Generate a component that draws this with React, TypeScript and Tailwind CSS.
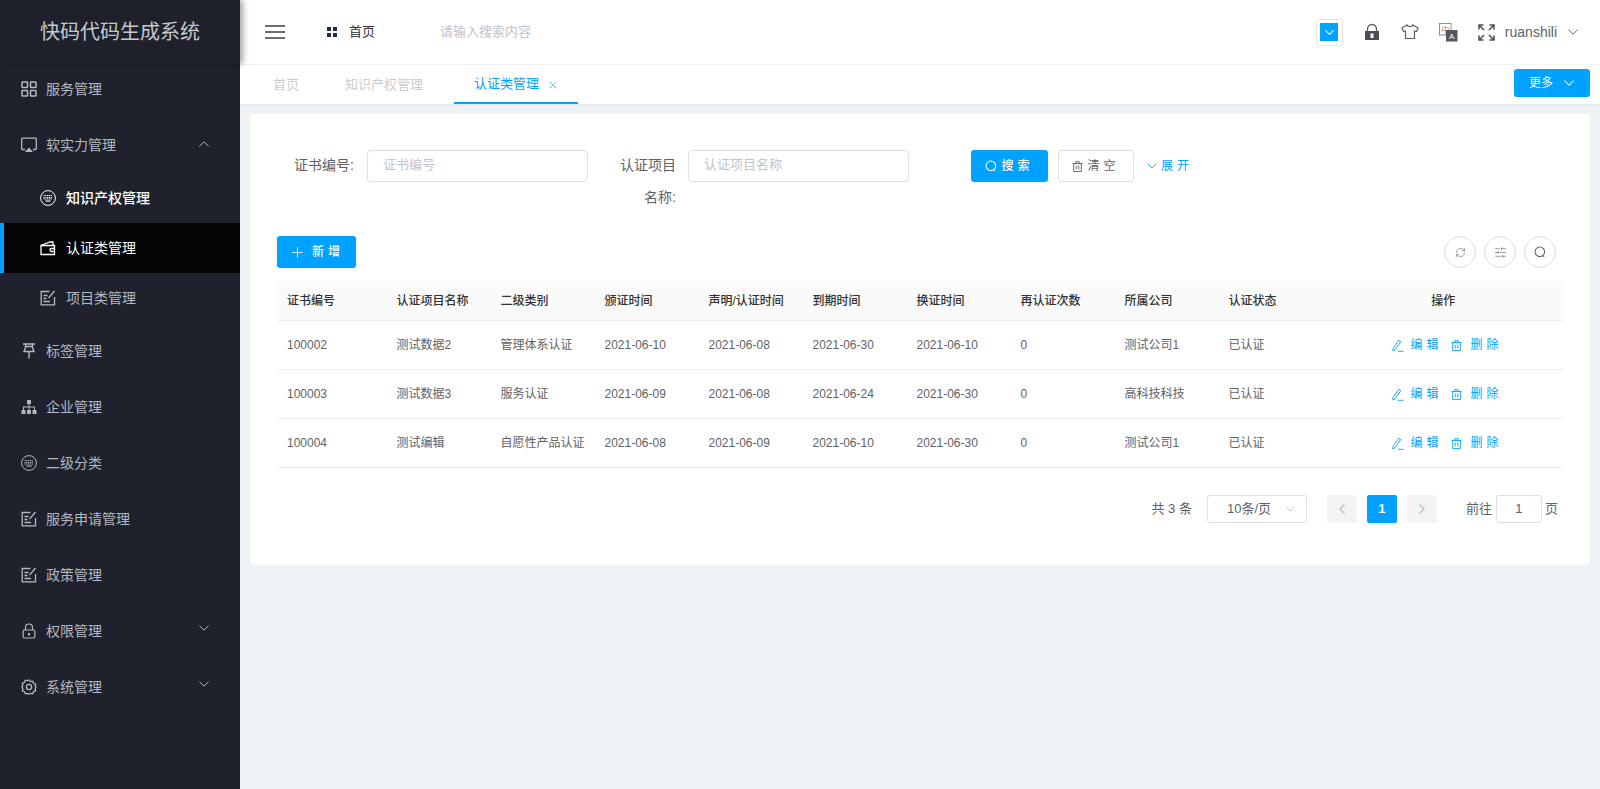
import { ChevronDown, ChevronLeft, ChevronRight, ChevronUp, Plus, RefreshCw, SlidersHorizontal, X } from 'lucide-react';
import type { ReactNode } from 'react';

const FONT = "font-['Liberation_Sans','Noto_Sans_CJK_SC',sans-serif]";

// sidebar icons, drawn to match the iconfont glyphs
const GridIcon = () => (
  <svg width="16" height="16" viewBox="0 0 16 16" fill="none" stroke="currentColor" strokeWidth="1.5">
    <rect x="1" y="1" width="5.5" height="5.5" rx="0.5" />
    <rect x="9.5" y="1" width="5.5" height="5.5" rx="0.5" />
    <rect x="1" y="9.5" width="5.5" height="5.5" rx="0.5" />
    <rect x="9.5" y="9.5" width="5.5" height="5.5" rx="0.5" />
  </svg>
);
const ScreenIcon = () => (
  <svg width="16" height="16" viewBox="0 0 16 16" fill="none" stroke="currentColor" strokeWidth="1.3">
    <path d="M4 12.5H1.5a.8.8 0 0 1-.8-.8V2a.8.8 0 0 1 .8-.8h13a.8.8 0 0 1 .8.8v9.7a.8.8 0 0 1-.8.8H12" />
    <path d="M8 10.5l4 4.5H4z" fill="currentColor" stroke="none" />
  </svg>
);
const KeyboardIcon = () => (
  <svg width="16" height="16" viewBox="0 0 16 16" fill="none" stroke="currentColor" strokeWidth="1">
    <circle cx="8" cy="8" r="7.4" />
    <path d="M3.5 5.5h9M3.5 7.5h9M3.5 9h9" strokeDasharray="1.2 0.6" strokeWidth="1.1" />
    <path d="M5.5 11h5" strokeWidth="1.1" />
  </svg>
);
const WalletIcon = () => (
  <svg width="16" height="16" viewBox="0 0 16 16" fill="none" stroke="currentColor" strokeWidth="1.3">
    <path d="M1 5.5h13.5v9H1z" />
    <path d="M1 5.5l9-3.5h3v3.5" />
    <path d="M14.5 8.5h-3a1.3 1.3 0 0 0 0 3h3" />
  </svg>
);
const NoteIcon = () => (
  <svg width="16" height="16" viewBox="0 0 16 16" fill="none" stroke="currentColor" strokeWidth="1.3">
    <path d="M9.5 1.5H1.2v13.3h13.3V7" />
    <path d="M3.5 5.5h4M3.5 8.5h3M3.5 11.5h6.5" />
    <path d="M8.5 8L14.5 1" />
  </svg>
);
const PinIcon = () => (
  <svg width="16" height="16" viewBox="0 0 16 16" fill="none" stroke="currentColor" strokeWidth="1.4">
    <path d="M2 1h12M4.5 1v2.5h7V1M5 3.5L3 8.5h10l-2-5M8 8.5V15.5" />
  </svg>
);
const TreeIcon = () => (
  <svg width="16" height="16" viewBox="0 0 16 16" fill="currentColor">
    <rect x="6" y="1" width="4" height="4" rx="0.6" />
    <rect x="0.5" y="11" width="4" height="4" rx="0.6" />
    <rect x="6" y="11" width="4" height="4" rx="0.6" />
    <rect x="11.5" y="11" width="4" height="4" rx="0.6" />
    <path d="M7.5 5h1v2.5h5.5v3.5h-1V8.5H8.500V11h-1V8.5H3V11H2V7.5h5.500z" />
  </svg>
);
const LockIcon = () => (
  <svg width="16" height="16" viewBox="0 0 16 16" fill="none" stroke="currentColor" strokeWidth="1.2">
    <rect x="2.2" y="7" width="11.6" height="8" rx="1.2" />
    <path d="M4.5 7V4.5a3.5 3.5 0 0 1 7 0V7" />
    <rect x="7" y="10" width="2" height="2.5" fill="currentColor" stroke="none" />
  </svg>
);
const GearIcon = () => (
  <svg width="16" height="16" viewBox="0 0 16 16" fill="none" stroke="currentColor" strokeWidth="1.3">
    <path d="M8 1l1.5 1.6 2.2-.4.8 2.1 2.1.8-.4 2.2L15 8l-.8 1.7.4 2.2-2.1.8-.8 2.1-2.2-.4L8 15l-1.500-.6-2.200.4-.8-2.100-2.100-.8.4-2.200L1 8l.8-1.700-.4-2.200 2.100-.8.8-2.100 2.200.4z" />
    <circle cx="8" cy="8" r="2.6" />
  </svg>
);
const PencilIcon = () => (
  <svg width="12" height="13" viewBox="0 0 12 13" fill="none" stroke="currentColor" strokeWidth="0.9">
    <path d="M1 9.500L6.800 1.200l2 1.400L3 10.800l-2.200 1z" />
    <path d="M6 12.300h5.500" />
  </svg>
);
const SearchGlyph = ({ size = 12 }: { size?: number }) => (
  <svg width={size} height={size} viewBox="0 0 14 14" fill="none" stroke="currentColor" strokeWidth="1.2">
    <circle cx="6.800" cy="6.800" r="5.600" />
    <path d="M10 11l1.800 1.800" />
  </svg>
);
const TrashGlyph = ({ size = 11 }: { size?: number }) => (
  <svg width={size} height={size} viewBox="0 0 13 13" fill="none" stroke="currentColor" strokeWidth="1.1">
    <path d="M0.500 3h12M4.500 3V0.800h4V3M2 3v9.500h9V3M5 5.500v4.500M8 5.500v4.500" />
  </svg>
);

const menus: { label: string; icon: ReactNode; arrow?: 'up' | 'down'; sub?: boolean; active?: boolean; white?: boolean; bold?: boolean }[] = [
  { label: '服务管理', icon: <GridIcon /> },
  { label: '软实力管理', icon: <ScreenIcon />, arrow: 'up' },
  { label: '知识产权管理', icon: <KeyboardIcon />, sub: true, white: true, bold: true },
  { label: '认证类管理', icon: <WalletIcon />, sub: true, active: true, white: true },
  { label: '项目类管理', icon: <NoteIcon />, sub: true },
  { label: '标签管理', icon: <PinIcon /> },
  { label: '企业管理', icon: <TreeIcon /> },
  { label: '二级分类', icon: <KeyboardIcon /> },
  { label: '服务申请管理', icon: <NoteIcon /> },
  { label: '政策管理', icon: <NoteIcon /> },
  { label: '权限管理', icon: <LockIcon />, arrow: 'down' },
  { label: '系统管理', icon: <GearIcon />, arrow: 'down' },
];

const columns = ['证书编号', '认证项目名称', '二级类别', '颁证时间', '声明/认证时间', '到期时间', '换证时间', '再认证次数', '所属公司', '认证状态'];

const rows = [
  ['100002', '测试数据2', '管理体系认证', '2021-06-10', '2021-06-08', '2021-06-30', '2021-06-10', '0', '测试公司1', '已认证'],
  ['100003', '测试数据3', '服务认证', '2021-06-09', '2021-06-08', '2021-06-24', '2021-06-30', '0', '高科技科技', '已认证'],
  ['100004', '测试编辑', '自愿性产品认证', '2021-06-08', '2021-06-09', '2021-06-10', '2021-06-30', '0', '测试公司1', '已认证'],
];

const Sidebar = () => (
  <aside className="w-[240px] shrink-0 bg-[#1f222d]">
    <div className="relative z-10 flex h-16 items-center justify-center bg-[#1e212b] text-[20px] text-[#c4c9cf] shadow-[3px_0_6px_rgba(0,0,0,0.35)]">
      快码代码生成系统
    </div>
    <nav className="-mt-[3px]">
      {menus.map((m) => (
        <div
          key={m.label}
          className={`relative flex items-center text-[14px] ${m.sub ? 'h-[50px] pl-[40px]' : 'h-14 pl-[21px]'} ${m.active ? 'border-l-4 border-[#00a2ff] !pl-[36px] bg-[#030406]' : ''} ${m.white ? 'text-white' : 'text-[#b4b9c0]'}`}
        >
          <span className="flex w-4 justify-center">{m.icon}</span>
          <span className={`${m.sub ? 'ml-[10px]' : 'ml-[9px]'} ${m.bold ? 'font-medium' : ''}`}>{m.label}</span>
          {m.arrow === 'up' && <ChevronUp size={18} strokeWidth={1.3} className="absolute left-[195px] top-[18px]" />}
          {m.arrow === 'down' && <ChevronDown size={18} strokeWidth={1.3} className="absolute left-[195px] top-[16px]" />}
        </div>
      ))}
    </nav>
  </aside>
);

const Header = () => (
  <header className="flex h-[65px] items-center border-b border-[#f0f2f5] bg-white pl-[25px] pr-[18px]">
    <div className="flex w-5 flex-col gap-[4px]">
      <span className="h-[2px] bg-[#6b6e73]" />
      <span className="h-[2px] bg-[#6b6e73]" />
      <span className="h-[2px] bg-[#6b6e73]" />
    </div>
    <div className="ml-[42px] grid grid-cols-2 gap-[2px]">
      <span className="h-1 w-1 bg-[#1f2d3d]" />
      <span className="h-1 w-1 bg-[#1f2d3d]" />
      <span className="h-1 w-1 bg-[#1f2d3d]" />
      <span className="h-1 w-1 bg-[#1f2d3d]" />
    </div>
    <span className="ml-[12px] text-[13px] text-[#303133]">首页</span>
    <span className="ml-[65px] text-[13px] text-[#c0c4cc]">请输入搜索内容</span>
    <div className="ml-auto flex items-center">
      <div className="flex h-[27px] w-[27px] items-center justify-center rounded-[3px] border border-[#e6e6e6]">
        <span className="flex h-[18px] w-[18px] items-center justify-center bg-[#00a2ff] text-white">
          <ChevronDown size={15} strokeWidth={1.8} />
        </span>
      </div>
      <svg className="ml-[21px]" width="16" height="18" viewBox="0 0 16 18" fill="none">
        <path d="M3.500 8V6a4.500 4.500 0 0 1 9 0v2" stroke="#5a5e66" strokeWidth="1.3" />
        <path d="M1 8h14v9H1z" fill="#4a4d52" />
        <rect x="6.500" y="10.500" width="3" height="4.500" fill="#fff" />
      </svg>
      <svg className="ml-[21px]" width="18" height="16" viewBox="0 0 18 16" fill="none" stroke="#5a5e66" strokeWidth="1.2">
        <path d="M6 1L1 4l1.500 3.500L4.500 7v7.500h9V7l2 .5L17 4l-5-3c-.5 2-5.500 2-6 0z" />
      </svg>
      <svg className="ml-[20px]" width="19" height="19" viewBox="0 0 19 19" fill="none">
        <rect x="0.500" y="0.500" width="11.500" height="11.500" fill="#fff" stroke="#8d9095" />
        <text x="2.500" y="9.500" fontSize="8" fill="#d9705c">中</text>
        <rect x="7" y="7" width="11.500" height="11.500" fill="#55585e" />
        <text x="10" y="16" fontSize="8" fill="#fff" fontWeight="500">A</text>
      </svg>
      <svg className="ml-[20px]" width="17" height="17" viewBox="0 0 17 17" fill="none" stroke="#4f5257" strokeWidth="1.6">
        <path d="M1 5.500V1h4.500M1 1l5 5M11.500 1H16v4.500M16 1l-5 5M1 11.500V16h4.500M1 16l5-5M16 11.500V16h-4.500M16 16l-5-5" />
      </svg>
      <span className="ml-[10px] text-[14px] text-[#606266]">ruanshili</span>
      <ChevronDown className="ml-[7px] text-[#606266]" size={18} strokeWidth={1.3} />
    </div>
  </header>
);

const Tabs = () => (
  <div className="flex h-[39px] items-stretch bg-white pl-[33px] pr-[10px] text-[13px] shadow-[0_1px_3px_rgba(0,0,0,0.06)]">
    <span className="flex items-center text-[#cccccc]">首页</span>
    <span className="ml-[46px] flex items-center text-[#cccccc]">知识产权管理</span>
    <span className="ml-[31px] flex items-center border-b-2 border-[#00a2ff] pl-[20px] pr-[19px] text-[#00a2ff]">
      认证类管理
      <X size={12} strokeWidth={1.2} className="ml-[8px] mt-[2px]" />
    </span>
    <button className="ml-auto mt-1 flex h-7 w-[76px] items-center justify-center gap-[7px] rounded-[3px] bg-[#00a2ff] pl-[3px] text-[12px] text-white">
      更多
      <ChevronDown size={18} strokeWidth={1.4} />
    </button>
  </div>
);

const Field = ({ label, width, placeholder }: { label: ReactNode; width: string; placeholder: string }) => (
  <div className="flex items-start">
    <label className={`${width} -mt-px text-right text-[14px] leading-8 text-[#606266]`}>{label}</label>
    <div className="ml-[13px] flex h-8 w-[221px] items-center rounded-[4px] border border-[#dcdfe6] pb-[2px] pl-[15px] text-[13px] text-[#c0c4cc]">
      {placeholder}
    </div>
  </div>
);

const RoundButton = ({ children }: { children: ReactNode }) => (
  <span className="flex h-8 w-8 items-center justify-center rounded-full border border-[#dcdfe6] text-[#606266]">{children}</span>
);

const Card = () => (
  <section className="rounded-[4px] bg-white pl-[27px] pr-[26px] pt-9 pb-[42px]">
    <div className="flex h-16 items-start">
      <Field label="证书编号:" width="w-[77px]" placeholder="证书编号" />
      <div className="ml-[7px]">
        <Field label={<>认证项目<br />名称:</>} width="w-[81px] -mr-px" placeholder="认证项目名称" />
      </div>
      <button className="ml-[62px] flex h-8 w-[77px] items-center justify-center gap-[4px] rounded-[3px] bg-[#00a2ff] text-[12px] font-medium tracking-[4px] text-white">
        <SearchGlyph />
        搜索
      </button>
      <button className="ml-[10px] flex h-8 w-[76px] items-center justify-center gap-[4px] rounded-[3px] border border-[#dcdfe6] text-[12px] tracking-[4px] text-[#606266]">
        <TrashGlyph />
        清空
      </button>
      <span className="ml-[10px] flex h-8 items-center gap-[1px] text-[12px] tracking-[4px] text-[#00a2ff]">
        <ChevronDown size={16} strokeWidth={1.3} />
        展开
      </span>
    </div>

    <div className="mt-[22px] flex items-center justify-between pr-[8px]">
      <button className="flex h-8 w-[79px] items-center justify-center gap-[6px] rounded-[3px] bg-[#00a2ff] text-[12px] font-medium tracking-[4px] text-white">
        <Plus size={17} strokeWidth={1.2} />
        新增
      </button>
      <div className="flex gap-2">
        <RoundButton><RefreshCw size={11} strokeWidth={1.2} /></RoundButton>
        <RoundButton><SlidersHorizontal size={13} strokeWidth={1.2} /></RoundButton>
        <RoundButton><SearchGlyph /></RoundButton>
      </div>
    </div>

    <div className="mt-[13px] text-[12px] text-[#606266]">
      <div className="grid h-10 grid-cols-[109.5px_repeat(9,104px)_1fr] items-center border-b border-[#ebeef5] bg-[#fafafa] font-medium text-[#303133]">
        {columns.map((c) => (
          <div key={c} className="pl-[10px]">{c}</div>
        ))}
        <div className="text-center">操作</div>
      </div>
      {rows.map((row) => (
        <div key={row[0]} className="grid h-[49px] grid-cols-[109.5px_repeat(9,104px)_1fr] items-center border-b border-[#ebeef5]">
          {row.map((cell, i) => (
            <div key={i} className="pl-[10px] whitespace-nowrap">{cell}</div>
          ))}
          <div className="flex items-center pl-[69px] tracking-[4px] text-[#00a2ff]">
            <PencilIcon />
            <span className="ml-[7px]">编辑</span>
            <span className="ml-[8px]"><TrashGlyph /></span>
            <span className="ml-[9px]">删除</span>
          </div>
        </div>
      ))}
    </div>

    <div className="mt-[27px] flex h-7 items-center justify-end pr-[6px] text-[13px] text-[#606266]">
      <span>共 3 条</span>
      <div className="relative ml-[15px] flex h-7 w-[100px] items-center rounded-[3px] border border-[#dcdfe6] pl-[19px]">
        10条/页
        <ChevronDown size={16} strokeWidth={1.2} className="absolute right-[8px] top-[5px] text-[#c0c4cc]" />
      </div>
      <span className="ml-5 flex h-7 w-[30px] items-center justify-center rounded-[2px] bg-[#f4f4f5] text-[#c0c4cc]">
        <ChevronLeft size={16} strokeWidth={2.6} />
      </span>
      <span className="ml-[10px] flex h-7 w-[30px] items-center justify-center rounded-[2px] bg-[#00a2ff] font-bold text-white">1</span>
      <span className="ml-[10px] flex h-7 w-[30px] items-center justify-center rounded-[2px] bg-[#f4f4f5] text-[#c0c4cc]">
        <ChevronRight size={16} strokeWidth={2.6} />
      </span>
      <span className="ml-[29px]">前往</span>
      <span className="ml-1 flex h-7 w-[46px] items-center justify-center rounded-[3px] border border-[#dcdfe6]">1</span>
      <span className="ml-[3px]">页</span>
    </div>
  </section>
);

export default function App() {
  return (
    <div className={`${FONT} flex h-[789px] overflow-hidden bg-[#eff2f5]`}>
      <Sidebar />
      <main className="min-w-0 flex-1">
        <Header />
        <Tabs />
        <div className="px-[10px] pt-[10px]">
          <Card />
        </div>
      </main>
    </div>
  );
}
